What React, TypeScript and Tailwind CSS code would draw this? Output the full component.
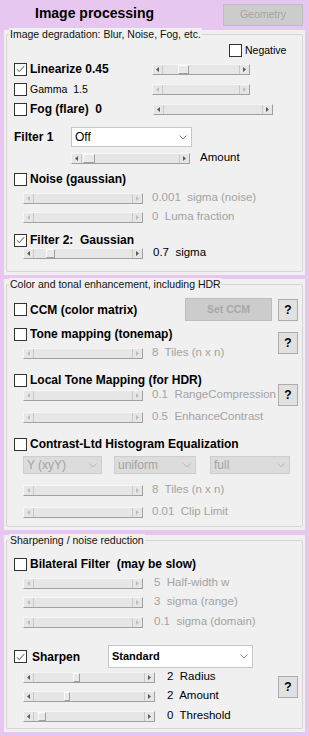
import React from "react";

// disabled text colour used all over the form
const DIM = "text-[#a3a3a3]";

function Check({ checked = false }: { checked?: boolean }) {
  return (
    <span className="w-[13px] h-[13px] shrink-0 bg-white border border-[#333333] flex items-center justify-center">
      {checked && (
        <svg width="9" height="8" viewBox="0 0 9 8">
          <path d="M0.8 4.2 L3.3 6.6 L8.2 1.1" fill="none" stroke="#4a4a4a" strokeWidth="1" />
        </svg>
      )}
    </span>
  );
}

function Arrow({ dir, on }: { dir: "l" | "r"; on: boolean }) {
  return (
    <svg width="3" height="5" viewBox="0 0 3 5">
      <path d={dir === "l" ? "M3 0 L0 2.5 L3 5Z" : "M0 0 L3 2.5 L0 5Z"} fill={on ? "#5a5a5a" : "#bdbdbd"} />
    </svg>
  );
}

interface BarProps {
  w: string;
  on?: boolean;
  pos?: number; // thumb offset in px from track start
  tw?: number; // thumb width
}

function Bar({ w, on = false, pos = 0, tw = 0 }: BarProps) {
  return (
    <div className={`${w} h-[11px] shrink-0 flex bg-[#e6e6e6] border border-t-[#f6f6f6] border-l-[#f6f6f6] border-b-[#a0a0a0] border-r-[#a0a0a0]`}>
      <div className="w-[10px] flex items-center justify-center border-r border-[#c9c9c9]">
        <Arrow dir="l" on={on} />
      </div>
      <div className="flex-1 flex">
        {tw > 0 && (
          <div
            className="h-full bg-[#e9e9e9] border border-t-[#fbfbfb] border-l-[#fbfbfb] border-b-[#a0a0a0] border-r-[#a0a0a0]"
            style={{ marginLeft: pos, width: tw }}
          />
        )}
      </div>
      <div className="w-[10px] flex items-center justify-center border-l border-[#c9c9c9]">
        <Arrow dir="r" on={on} />
      </div>
    </div>
  );
}

function Chevron({ dim }: { dim?: boolean }) {
  return (
    <svg width="8" height="5" viewBox="0 0 8 5" className="shrink-0">
      <path d="M0.5 0.5 L4 4 L7.5 0.5" fill="none" stroke={dim ? "#b8b8b8" : "#8a8a8a"} strokeWidth="1" />
    </svg>
  );
}

function Select({ cls, text, bold, dim }: { cls: string; text: string; bold?: boolean; dim?: boolean }) {
  return (
    <div
      className={`${cls} shrink-0 flex items-center border ${
        dim ? "bg-[#dcdcdc] border-[#cecece] " + DIM : "bg-white border-[#c6c6c6] text-black"
      }`}
    >
      <span className={`flex-1 pl-[3px] leading-none ${bold ? "font-bold text-[11px]" : "text-[12px]"}`}>{text}</span>
      <span className="w-[16px] h-full flex items-center justify-center">
        <Chevron dim={dim} />
      </span>
    </div>
  );
}

function Help() {
  return (
    <div className="w-[20px] h-[22px] shrink-0 flex items-center justify-center bg-[#e1e1e1] border border-[#adadad] text-[12px] font-bold leading-none">
      ?
    </div>
  );
}

function Title({ checked, text, gap = "gap-[3px]" }: { checked?: boolean; text: string; gap?: string }) {
  return (
    <div className={`flex items-center ${gap} h-[14px]`}>
      <Check checked={checked} />
      <span className="text-[12px] font-bold leading-none whitespace-pre">{text}</span>
    </div>
  );
}

function SubBar({ text, on, pos, tw, mt, w = "w-[120px]", gap = "ml-[9px]" }: { text: string; on?: boolean; pos?: number; tw?: number; mt: string; w?: string; gap?: string }) {
  return (
    <div className={`${mt} h-[12px] flex items-center pl-[9px]`}>
      <Bar w={w} on={on} pos={pos} tw={tw} />
      <span className={`${gap} text-[11.5px] leading-none whitespace-pre ${on ? "text-black" : DIM}`}>{text}</span>
    </div>
  );
}

function Group({ legend, h, children }: { legend: string; h: string; children: React.ReactNode }) {
  return (
    <div className={`${h} bg-[#f0f0f0] pt-[5px] px-[2px] pb-[3px] flex`}>
      <div className="relative flex-1 border border-[#d5d5d5] rounded-[2px] pl-[7px] pr-[4px] flex flex-col">
        <span className="absolute -top-[7px] left-[2px] px-[1px] bg-[#f0f0f0] text-[10.5px] leading-[12px] text-[#111]">
          {legend}
        </span>
        {children}
      </div>
    </div>
  );
}

export default function App() {
  return (
    <div className="w-[309px] h-[736px] bg-[#e7c7ef] px-[4px] overflow-hidden text-black font-['Liberation_Sans',Arial,sans-serif]">
      {/* header */}
      <div className="h-[30px] flex items-start">
        <h1 className="pl-[31px] pt-[5px] text-[14px] font-bold leading-[17px]">Image processing</h1>
        <div className="ml-auto mr-[2px] mt-[4px] w-[80px] h-[22px] flex items-center justify-center bg-[#cccccc] border border-[#bdbdbd] text-[10.5px] text-[#a5a5a5]">
          Geometry
        </div>
      </div>

      {/* degradation */}
      <Group legend="Image degradation: Blur, Noise, Fog, etc." h="h-[245px] !pt-[4px]">
        <div className="mt-[8px] h-[14px] flex items-center gap-[3px] pl-[215px]">
          <Check />
          <span className="text-[10.5px] leading-none">Negative</span>
        </div>
        <div className="mt-[5px] h-[14px] flex items-center">
          <div className="w-[138px]">
            <Title checked text="Linearize 0.45" />
          </div>
          <Bar w="w-[98px]" on pos={15} tw={11} />
        </div>
        <div className="mt-[6px] h-[14px] flex items-center">
          <div className="w-[138px] flex items-center gap-[3px]">
            <Check />
            <span className="text-[10.5px] leading-none whitespace-pre">Gamma  1.5</span>
          </div>
          <Bar w="w-[98px]" />
        </div>
        <div className="mt-[6px] h-[14px] flex items-center">
          <div className="w-[139px]">
            <Title text="Fog (flare)  0" />
          </div>
          <Bar w="w-[120px]" on />
        </div>
        <div className="mt-[11px] h-[20px] flex items-center">
          <span className="w-[57px] text-[12px] font-bold leading-none">Filter 1</span>
          <Select cls="w-[121px] h-[20px]" text="Off" />
        </div>
        <div className="mt-[5px] h-[12px] flex items-center pl-[57px]">
          <Bar w="w-[119px]" on pos={1} tw={12} />
          <span className="ml-[10px] text-[11.5px] leading-none">Amount</span>
        </div>
        <div className="mt-[8px]">
          <Title text="Noise (gaussian)" />
        </div>
        <SubBar mt="mt-[6px]" text="0.001  sigma (noise)" />
        <SubBar mt="mt-[7px]" text="0  Luma fraction" />
        <div className="mt-[10px]">
          <Title checked text="Filter 2:  Gaussian" />
        </div>
        <SubBar mt="mt-0" text="0.7  sigma" on pos={12} tw={9} gap="ml-[10px]" />
      </Group>

      {/* colour / tone */}
      <div className="mt-[4px]">
        <Group legend="Color and tonal enhancement, including HDR" h="h-[251px]">
          <div className="mt-[13px] h-[23px] flex items-center">
            <Title text="CCM (color matrix)" />
            <div className="ml-auto w-[87px] h-[23px] flex items-center justify-center bg-[#cccccc] border border-[#bdbdbd] text-[10.5px] font-bold text-[#a8a8a8]">
              Set CCM
            </div>
            <div className="ml-[6px]">
              <Help />
            </div>
          </div>
          <div className="mt-[6px] flex">
            <div className="flex-1 flex flex-col">
              <Title text="Tone mapping (tonemap)" />
              <SubBar mt="mt-[6px]" text="8  Tiles (n x n)" />
            </div>
            <div className="self-center">
              <Help />
            </div>
          </div>
          <div className="mt-[14px] flex">
            <div className="flex-1 flex flex-col">
              <Title text="Local Tone Mapping (for HDR)" />
              <SubBar mt="mt-[2px]" text="0.1  RangeCompression" />
              <SubBar mt="mt-[10px]" text="0.5  EnhanceContrast" />
            </div>
            <div className="mt-[11px]">
              <Help />
            </div>
          </div>
          <div className="mt-[14px]">
            <Title text="Contrast-Ltd Histogram Equalization" />
          </div>
          <div className="mt-[5px] h-[18px] flex items-center pl-[9px]">
            <Select cls="w-[79px] h-[18px]" text="Y (xyY)" dim />
            <Select cls="ml-[12px] w-[82px] h-[18px]" text="uniform" dim />
            <Select cls="ml-[14px] w-[80px] h-[18px]" text="full" dim />
          </div>
          <SubBar mt="mt-[10px]" text="8  Tiles (n x n)" />
          <SubBar mt="mt-[10px]" text="0.01  Clip Limit" />
        </Group>
      </div>

      {/* sharpening */}
      <div className="mt-[5px]">
        <Group legend="Sharpening / noise reduction" h="h-[197px]">
          <div className="mt-[16px]">
            <Title text="Bilateral Filter  (may be slow)" />
          </div>
          <SubBar mt="mt-[6px]" text="5  Half-width w" gap="ml-[11px]" />
          <SubBar mt="mt-[7px]" text="3  sigma (range)" gap="ml-[11px]" />
          <SubBar mt="mt-[8px]" text="0.1  sigma (domain)" gap="ml-[11px]" />
          <div className="mt-[17px] h-[23px] flex items-center">
            <div className="w-[94px]">
              <Title checked text="Sharpen" gap="gap-[5px]" />
            </div>
            <Select cls="w-[145px] h-[23px]" text="Standard" bold />
          </div>
          <div className="mt-[3px] flex">
            <div className="flex-1 flex flex-col">
              <SubBar mt="mt-0" w="w-[132px]" gap="ml-[12px]" text="2  Radius" on pos={39} tw={7} />
              <SubBar mt="mt-[7px]" w="w-[132px]" gap="ml-[12px]" text="2  Amount" on pos={30} tw={6} />
              <SubBar mt="mt-[8px]" w="w-[132px]" gap="ml-[12px]" text="0  Threshold" on pos={4} tw={8} />
            </div>
            <div className="mt-[5px]">
              <Help />
            </div>
          </div>
        </Group>
      </div>
    </div>
  );
}
